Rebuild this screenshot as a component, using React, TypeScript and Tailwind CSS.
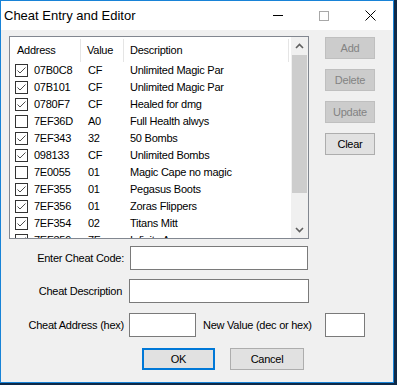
import React from 'react'

type Cheat = {
    address: string
    value: string
    description: string
    enabled: boolean
}

const cheats: Cheat[] = [
    { address: '07B0C8', value: 'CF', description: 'Unlimited Magic Par', enabled: true },
    { address: '07B101', value: 'CF', description: 'Unlimited Magic Par', enabled: true },
    { address: '0780F7', value: 'CF', description: 'Healed for dmg', enabled: true },
    { address: '7EF36D', value: 'A0', description: 'Full Health alwys', enabled: false },
    { address: '7EF343', value: '32', description: '50 Bombs', enabled: true },
    { address: '098133', value: 'CF', description: 'Unlimited Bombs', enabled: true },
    { address: '7E0055', value: '01', description: 'Magic Cape no magic', enabled: false },
    { address: '7EF355', value: '01', description: 'Pegasus Boots', enabled: true },
    { address: '7EF356', value: '01', description: 'Zoras Flippers', enabled: true },
    { address: '7EF354', value: '02', description: 'Titans Mitt', enabled: true },
    { address: '7EF359', value: '7F', description: 'Infinite Arrows', enabled: true },
]

function CheckBox({ checked }: { checked: boolean }) {
    return (
        <div className="w-[13px] h-[13px] border border-[#333333] bg-white shrink-0 flex items-center justify-center">
            {checked && (
                <svg width="11" height="11" viewBox="0 0 11 11">
                    <path d="M1.5 5.5 L4 8 L9.5 2.5" fill="none" stroke="#4d4d4d" strokeWidth="1" />
                </svg>
            )}
        </div>
    )
}

function SideButton({ label, disabled }: { label: string; disabled?: boolean }) {
    return (
        <div
            className={
                disabled
                    ? 'w-[50px] h-[22px] border border-[#bfbfbf] bg-[#cccccc] text-[#838383] flex items-center justify-center'
                    : 'w-[50px] h-[22px] border border-[#adadad] bg-[#e1e1e1] text-black flex items-center justify-center'
            }
        >
            {label}
        </div>
    )
}

export default function App() {
    return (
        <div className="w-[397px] h-[385px] bg-[#0f2a48] overflow-hidden">
            <div
                className="w-[394px] h-[383px] border border-[#1883d7] bg-[#f0f0f0] flex flex-col text-[11px] tracking-[-0.25px] text-black"
                style={{ fontFamily: '"Liberation Sans", Arial, sans-serif' }}
            >
                {/* title bar */}
                <div className="h-[29px] bg-white flex items-center shrink-0">
                    <span className="pl-[3px] text-[13px] tracking-normal text-black">Cheat Entry and Editor</span>
                    <div className="ml-auto flex items-center h-full">
                        <div className="w-[46px] h-full flex items-center justify-center">
                            <div className="w-[10px] h-px bg-black" />
                        </div>
                        <div className="w-[46px] h-full flex items-center justify-center">
                            <div className="w-[10px] h-[10px] border border-[#a8a8a8]" />
                        </div>
                        <div className="w-[46px] h-full flex items-center justify-center">
                            <svg width="11" height="11" viewBox="0 0 11 11">
                                <path d="M0.5 0.5 L10.5 10.5 M10.5 0.5 L0.5 10.5" stroke="#000" strokeWidth="1" />
                            </svg>
                        </div>
                    </div>
                </div>

                {/* list + side buttons */}
                <div className="flex items-start">
                    <div className="ml-[8px] mt-[6px] w-[300px] h-[203px] border border-[#828790] bg-white flex overflow-hidden">
                        <div className="flex-1 flex flex-col overflow-hidden">
                            <div className="h-[25px] pt-[2px] flex items-stretch shrink-0">
                                <div className="w-[70px] pl-[7px] flex items-center">Address</div>
                                <div className="w-px bg-[#e5e5e5]" />
                                <div className="w-[42px] pl-[6px] flex items-center">Value</div>
                                <div className="w-px bg-[#e5e5e5]" />
                                <div className="w-[164px] pl-[6px] flex items-center">Description</div>
                                <div className="w-px bg-[#e5e5e5]" />
                            </div>
                            {cheats.map((c, i) => (
                                <div key={i} className="h-[17px] flex items-center shrink-0">
                                    <div className="w-[71px] pl-[5px] flex items-center">
                                        <CheckBox checked={c.enabled} />
                                        <span className="ml-[6px]">{c.address}</span>
                                    </div>
                                    <div className="w-[43px] pl-[7px]">{c.value}</div>
                                    <div className="pl-[6px] whitespace-nowrap">{c.description}</div>
                                </div>
                            ))}
                        </div>
                        {/* scrollbar */}
                        <div className="w-[17px] bg-[#f0f0f0] flex flex-col shrink-0">
                            <div className="h-[17px] flex items-center justify-center">
                                <svg width="9" height="6" viewBox="0 0 9 6">
                                    <path d="M1 5 L4.5 1.5 L8 5" fill="none" stroke="#606060" strokeWidth="1.6" />
                                </svg>
                            </div>
                            <div className="mt-[1px] mx-[1px] h-[138px] bg-[#cdcdcd]" />
                            <div className="mt-auto h-[17px] flex items-center justify-center">
                                <svg width="9" height="6" viewBox="0 0 9 6">
                                    <path d="M1 1 L4.5 4.5 L8 1" fill="none" stroke="#606060" strokeWidth="1.6" />
                                </svg>
                            </div>
                        </div>
                    </div>

                    <div className="ml-[16px] mt-[7px] flex flex-col gap-[10px]">
                        <SideButton label="Add" disabled />
                        <SideButton label="Delete" disabled />
                        <SideButton label="Update" disabled />
                        <SideButton label="Clear" />
                    </div>
                </div>

                {/* form */}
                <div className="mt-[7px] flex items-center">
                    <div className="w-[123px] text-right">Enter Cheat Code:</div>
                    <div className="ml-[6px] w-[178px] h-[24px] border border-[#7a7a7a] bg-white" />
                </div>
                <div className="mt-[9px] flex items-center">
                    <div className="w-[121px] text-right">Cheat Description</div>
                    <div className="ml-[7px] w-[180px] h-[24px] border border-[#7a7a7a] bg-white" />
                </div>
                <div className="mt-[10px] flex items-center">
                    <div className="w-[123px] text-right">Cheat Address (hex)</div>
                    <div className="ml-[5px] w-[67px] h-[24px] border border-[#7a7a7a] bg-white" />
                    <div className="ml-[7px] w-[112px] whitespace-nowrap">New Value (dec or hex)</div>
                    <div className="ml-[10px] w-[40px] h-[24px] border border-[#7a7a7a] bg-white" />
                </div>
                <div className="mt-[11px] flex items-center">
                    <div className="ml-[141px] w-[73px] h-[22px] border-2 border-[#0078d7] bg-[#e1e1e1] flex items-center justify-center">
                        OK
                    </div>
                    <div className="ml-[15px] w-[74px] h-[22px] border border-[#adadad] bg-[#e1e1e1] flex items-center justify-center">
                        Cancel
                    </div>
                </div>
            </div>
        </div>
    )
}
